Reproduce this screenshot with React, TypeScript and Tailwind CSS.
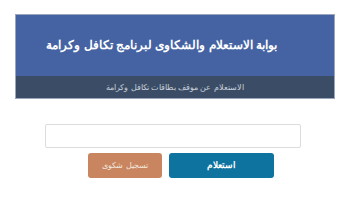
const App = () => {
  return (
    <div className="w-[360px] h-[200px] bg-white font-['Liberation_Sans',sans-serif]">
      <div className="pt-[14px] pl-[15px]">
        <div className="w-[320px] border border-[#9aa6bb]">
          <div dir="rtl" className="h-[61px] bg-[#4563a3] flex items-center pr-[57px]">
            <h1 className="text-[12.1px] font-bold text-white leading-none whitespace-nowrap">
              بوابة الاستعلام والشكاوى لبرنامج تكافل وكرامة
            </h1>
          </div>
          <div dir="rtl" className="h-[22px] bg-[#3b4d66] flex items-center justify-center">
            <p className="text-[8.3px] text-[#c8d0dc] leading-none whitespace-nowrap">
              الاستعلام عن موقف بطاقات تكافل وكرامة
            </p>
          </div>
        </div>
      </div>
      <div className="pl-[45px] mt-[25px]">
        <input
          type="text"
          className="block w-[256px] h-[24px] border border-[#dcdcdc] rounded-[2px] bg-white outline-none"
        />
        <div className="flex gap-[7px] mt-[5px] ml-[43px]">
          <button className="w-[74px] h-[25px] rounded-[3px] bg-[#c8855f] text-[#f3e6dc] text-[7.5px] whitespace-nowrap">
            تسجيل شكوى
          </button>
          <button className="w-[105px] h-[25px] rounded-[3px] bg-[#0f73a0] text-white text-[9px] font-bold">
            استعلام
          </button>
        </div>
      </div>
    </div>
  );
};

export default App;
